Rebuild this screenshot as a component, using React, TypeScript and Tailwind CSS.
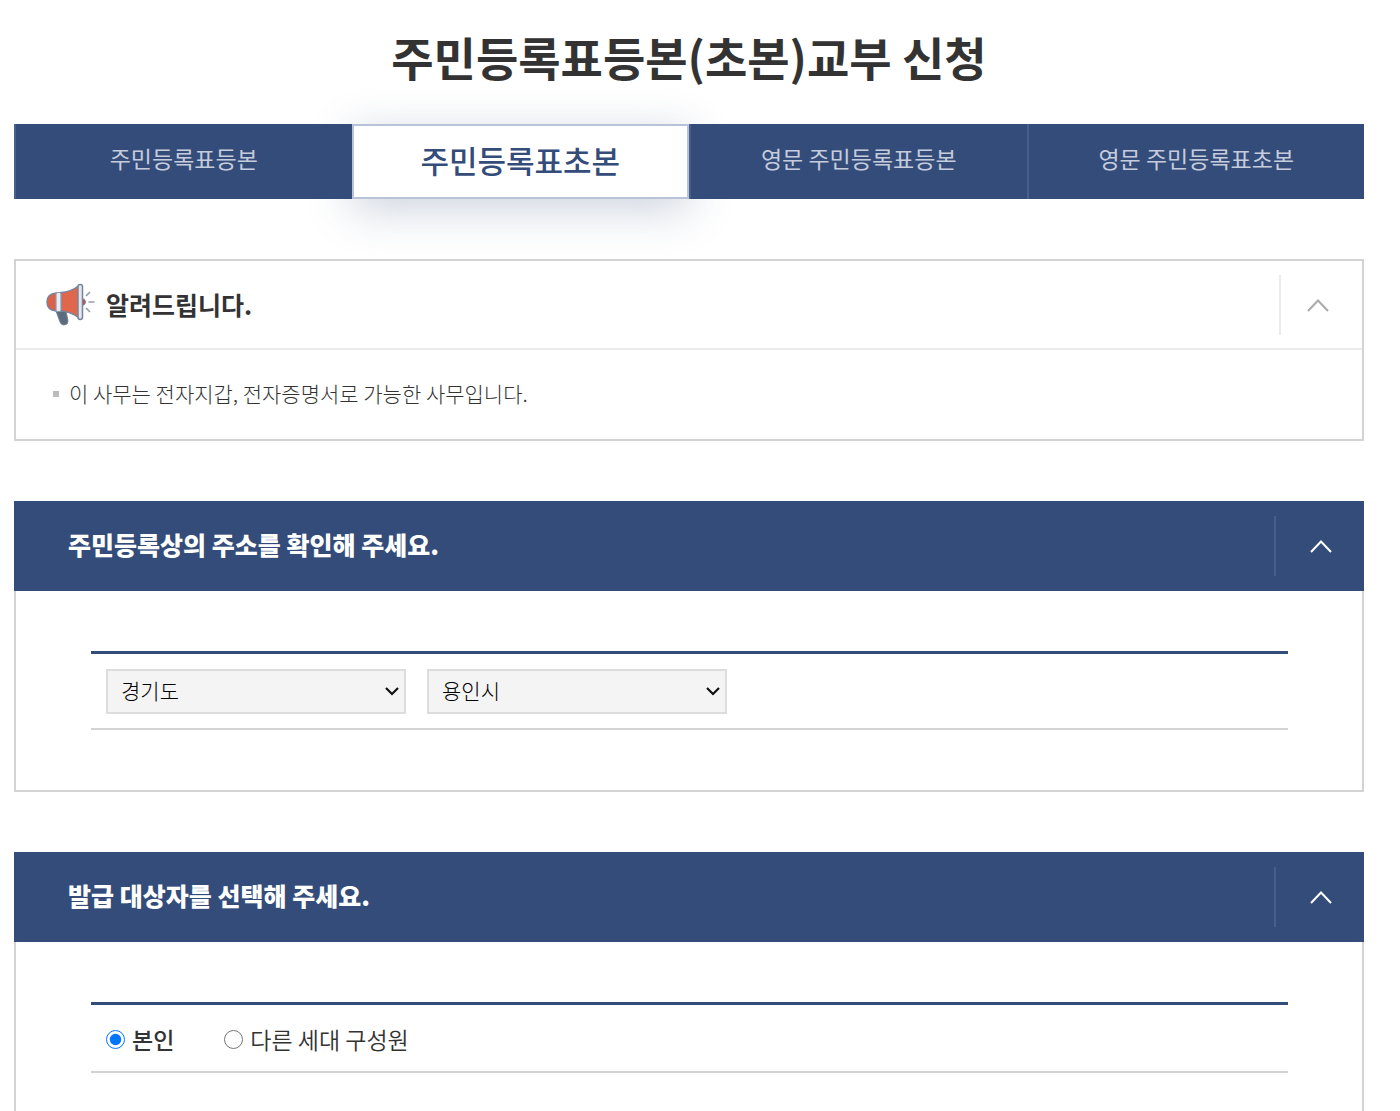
import { useState, type ReactNode } from 'react';

function Chevron({ className }: { className: string }) {
  return (
    <svg width="24" height="16" viewBox="0 0 24 16" fill="none" className={className} aria-hidden="true">
      <path d="M2 14 L12 3.500 L22 14" stroke="currentColor" strokeWidth="2" />
    </svg>
  );
}

function Megaphone() {
  return (
    <svg width="50" height="44" viewBox="0 0 50 44" aria-hidden="true">
      <path d="M10 28 H20 L22 38 Q22 42 18 42 Q15 42 14 39 Z" fill="#5c6b7e" stroke="#77849b" />
      <path d="M10 10 H14 V28 H10 Q1 27 1 19 Q1 11 10 10Z" fill="#dd6048" stroke="#77849b" strokeWidth="1.500" />
      <path d="M15 9.500 Q25 9 33 2.500 V35 Q25 28.500 15 28Z" fill="#e0674c" stroke="#77849b" strokeWidth="1.500" />
      <rect x="10" y="9.500" width="5" height="19" rx="1.500" fill="#e8ebf3" stroke="#8e99ad" strokeWidth="1.200" />
      <path d="M36 15.500 Q39.500 16 39.500 19 Q39.500 22 36 22.500Z" fill="#c9503f" stroke="#77849b" />
      <rect x="32" y="1.500" width="4.500" height="35" rx="2.200" fill="#e3e6ef" stroke="#77849b" strokeWidth="1.500" />
      <path d="M40 13 L44 9 M42.500 19 H48.500 M40 25 L44 29" stroke="#929db3" strokeWidth="1.700" />
    </svg>
  );
}

function Select({ label, options }: { label: string; options: string[] }) {
  return (
    <div className="relative w-[300px]">
      <select
        aria-label={label}
        className="h-[45px] w-full appearance-none border-2 border-[#ddd] bg-[#f4f4f4] px-[13px] pb-0.5 text-[21px] font-light text-black"
      >
        {options.map((o) => (
          <option key={o}>{o}</option>
        ))}
      </select>
      <svg width="16" height="12" viewBox="0 0 16 12" fill="none" className="pointer-events-none absolute top-4 right-1.5" aria-hidden="true">
        <path d="M2 3 L8 9 L14 3" stroke="#111" strokeWidth="2.200" />
      </svg>
    </div>
  );
}

function Section({ title, children }: { title: string; children: ReactNode }) {
  const [open, setOpen] = useState(true);
  return (
    <section className="mt-[60px]">
      <div className="flex h-[90px] items-center justify-between bg-[#344c7a] pl-[54px] text-white">
        <h2 className="pb-0.5 text-[25px] font-black">{title}</h2>
        <button
          type="button"
          aria-label={title}
          aria-expanded={open}
          onClick={() => setOpen(!open)}
          className="flex h-[60px] w-[90px] items-center justify-center border-l-2 border-[#485e87] pl-0.5"
        >
          <Chevron className="text-white" />
        </button>
      </div>
      {open && (
        <div className="border-2 border-t-0 border-[#d3d3d3] py-[60px] pr-[74px] pl-[75px]">
          <div className="border-t-3 border-b-2 border-t-[#344c7a] border-b-[#d3d3d3] px-[15px]">{children}</div>
        </div>
      )}
    </section>
  );
}

const tabs = ['주민등록표등본', '주민등록표초본', '영문 주민등록표등본', '영문 주민등록표초본'];

export default function App() {
  const [tab, setTab] = useState(1);
  const [noticeOpen, setNoticeOpen] = useState(true);
  return (
    <main className="h-screen overflow-hidden bg-white pr-9 pl-3.5 font-['Noto_Sans_CJK_KR',sans-serif] text-[#333]">
      <h1 className="flex h-[124px] items-center justify-center pb-3 text-[46px] font-bold">주민등록표등본(초본)교부 신청</h1>
      <nav className="grid h-[75px] grid-cols-4 bg-[#344c7a]">
        {tabs.map((t, i) => (
          <button
            key={t}
            type="button"
            onClick={() => setTab(i)}
            className={
              i === tab
                ? 'border-2 border-[#b8c3da] bg-white pb-0.5 text-[31px] font-medium text-[#344c7a] shadow-[0_10px_45px_rgba(52,76,122,0.25)]'
                : 'relative z-10 border-l-2 border-[#485e8d] bg-[#344c7a] pb-1.5 text-[23px] text-[#c5cddd]'
            }
          >
            {t}
          </button>
        ))}
      </nav>
      <section className="mt-[60px] border-2 border-[#d3d3d3]">
        <div className="flex h-[89px] items-center justify-between border-b-2 border-[#ebebeb] pl-[30px]">
          <h2 className="flex items-center gap-2.5 text-[25px] font-bold">
            <Megaphone />
            <span>알려드립니다.</span>
          </h2>
          <button
            type="button"
            aria-label="알려드립니다."
            aria-expanded={noticeOpen}
            onClick={() => setNoticeOpen(!noticeOpen)}
            className="flex h-[60px] w-[83px] items-center justify-center border-l-2 border-[#ebebeb] pr-2"
          >
            <Chevron className="text-[#aaa]" />
          </button>
        </div>
        {noticeOpen && (
          <ul className="px-[37px] pt-[29px] pb-[31px]">
            <li className="flex items-center gap-2.5 text-[21px] leading-[29px] font-light">
              <span className="size-1.5 bg-[#bbb]" />이 사무는 전자지갑, 전자증명서로 가능한 사무입니다.
            </li>
          </ul>
        )}
      </section>
      <Section title="주민등록상의 주소를 확인해 주세요.">
        <div className="flex gap-[21px] pt-[15px] pb-3.5">
          <Select label="시도" options={['경기도']} />
          <Select label="시군구" options={['용인시']} />
        </div>
      </Section>
      <Section title="발급 대상자를 선택해 주세요.">
        <div className="flex h-[66px] items-center gap-[50px] pt-0.5 text-[23px]">
          <label className="flex items-center gap-[7px] font-medium">
            <input type="radio" name="target" defaultChecked className="size-[19px]" />
            <span>본인</span>
          </label>
          <label className="flex items-center gap-[7px] font-[350]">
            <input type="radio" name="target" className="size-[19px]" />
            <span>다른 세대 구성원</span>
          </label>
        </div>
      </Section>
    </main>
  );
}
